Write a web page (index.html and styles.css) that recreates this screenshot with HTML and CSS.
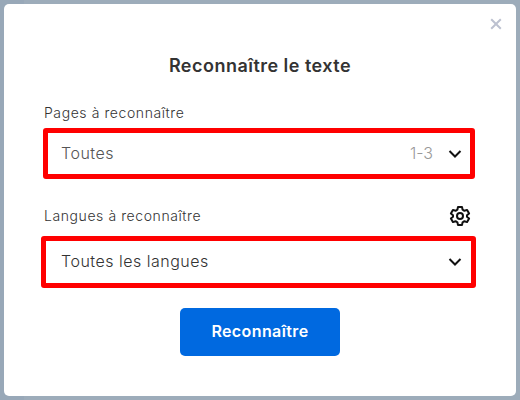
FILE: index.html
```html
<!DOCTYPE html>
<html lang="fr">
  <head>
    <meta charset="utf-8">
    <title>Reconnaître le texte</title>
    <link rel="stylesheet" href="styles.css">
  </head>
  <body>
    <main class="dialog">
      <button class="close" aria-label="Fermer">
        <svg width="12" height="12" viewBox="0 0 12 12"><path d="M1.2 1.2l9.6 9.6M10.8 1.2l-9.6 9.6"/></svg>
      </button>
      <h1 class="title">Reconnaître le texte</h1>
      <div class="label label-pages"><span>Pages à reconnaître</span></div>
      <div class="select select-pages">
        <span class="value">Toutes</span>
        <span class="range">1-3</span>
        <svg class="chevron" width="14" height="10" viewBox="0 0 14 10"><path d="M1.5 2L7 7.5 12.5 2"/></svg>
      </div>
      <div class="label label-langs">
        <span>Langues à reconnaître</span>
        <svg class="gear" width="22" height="22" viewBox="0 0 22 22">
          <path d="M9 1.9h4l.6 2.8 1.8 1.1 2.7-.9 2 3.5-2.1 1.8v1.6l2.1 1.8-2 3.5-2.7-.9-1.8 1.1-.6 2.8H9l-.6-2.8-1.8-1.1-2.7.9-2-3.5L4 11.8v-1.6L1.9 8.4l2-3.5 2.7.9 1.8-1.1z"/>
          <circle cx="11" cy="11" r="3"/>
        </svg>
      </div>
      <div class="select select-langs">
        <span class="value">Toutes les langues</span>
        <svg class="chevron" width="14" height="10" viewBox="0 0 14 10"><path d="M1.5 2L7 7.5 12.5 2"/></svg>
      </div>
      <button class="submit">Reconnaître</button>
    </main>
  </body>
</html>
```
FILE: styles.css
```css
* {
  box-sizing: border-box;
}
body {
  height: 400px;
  margin: 0;
  padding: 4px;
  overflow: hidden;
  background: linear-gradient(90deg, #98a8b8 24px, #9dacba 24px);
  font-family: Inter, "Open Sans", sans-serif;
  color: #333;
}
button {
  border: 0;
  font-family: inherit;
}
svg {
  display: block;
  flex: none;
  fill: none;
  stroke: #111;
  stroke-width: 2;
}
.dialog {
  position: relative;
  display: flex;
  flex-direction: column;
  height: 392px;
  padding: 50px 40px 0;
  border-radius: 5px;
  background: #fff;
}
.close {
  position: absolute;
  top: 14px;
  right: 14px;
  padding: 0;
  background: none;
}
.close svg {
  stroke: #bcc1d0;
}
.title {
  height: 24px;
  margin: 0;
  font-size: 18px;
  font-weight: 600;
  line-height: 24px;
  letter-spacing: 0.48px;
  text-align: center;
}
.label {
  display: flex;
  align-items: center;
  justify-content: space-between;
  font-size: 14px;
  font-weight: 300;
  letter-spacing: 0.58px;
}
.label span {
  padding-bottom: 2px;
}
.label-pages {
  height: 20px;
  margin-top: 25px;
}
.label-langs {
  height: 22px;
  margin-top: 26px;
}
.select {
  display: flex;
  align-items: center;
  border: 5px solid #f00;
  border-radius: 3px;
  font-size: 16px;
  font-weight: 300;
  letter-spacing: 0.5px;
}
.select-pages {
  height: 51px;
  margin: 5px 1px 0 -1px;
  padding: 0 8px 0 13px;
}
.select-langs {
  height: 52px;
  margin: 9px 0 0 -3px;
  padding: 0 9px 0 15px;
}
.value {
  flex: 1;
  padding-bottom: 2px;
}
.select-pages .value {
  color: #555;
}
.range {
  margin-right: 15px;
  padding-bottom: 2px;
  color: #999;
  letter-spacing: 0;
}
.gear {
  margin-right: 5px;
  stroke-linejoin: round;
}
.submit {
  align-self: center;
  width: 160px;
  height: 48px;
  margin-top: 20px;
  padding: 0 0 2px;
  border-radius: 5px;
  background: #0069e0;
  color: #fff;
  font-size: 16px;
  font-weight: 600;
  letter-spacing: 0.4px;
}
```
